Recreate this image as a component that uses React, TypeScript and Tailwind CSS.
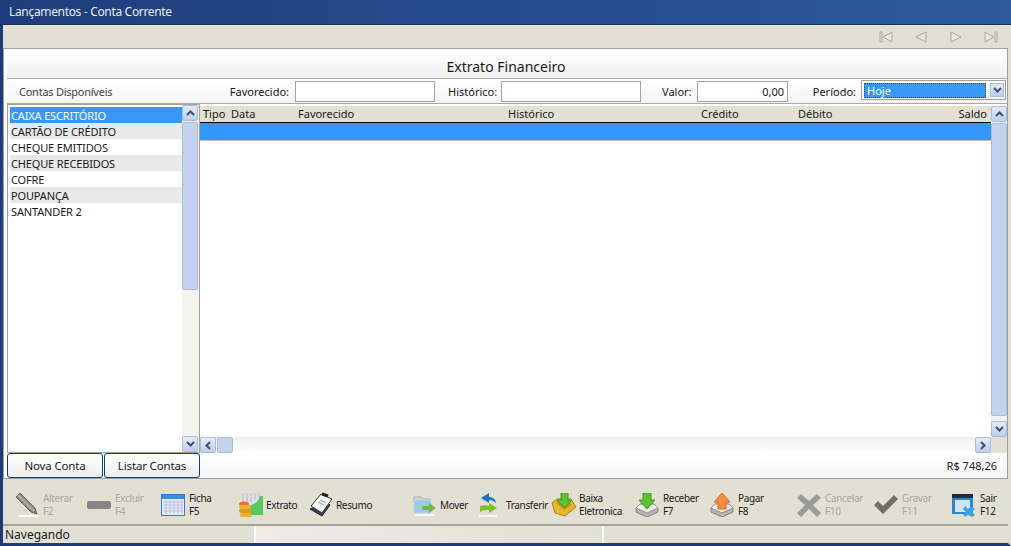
import type { ReactNode } from "react";

const Up = () => (
  <svg width="9" height="6" viewBox="0 0 9 6"><path d="M1 5 L4.5 1.5 L8 5" fill="none" stroke="#3f4f66" strokeWidth="2" /></svg>
);
const Down = () => (
  <svg width="9" height="6" viewBox="0 0 9 6"><path d="M1 1 L4.5 4.5 L8 1" fill="none" stroke="#3f4f66" strokeWidth="2" /></svg>
);
const Left = () => (
  <svg width="6" height="9" viewBox="0 0 6 9"><path d="M5 1 L1.5 4.5 L5 8" fill="none" stroke="#3f4f66" strokeWidth="2" /></svg>
);
const Right = () => (
  <svg width="6" height="9" viewBox="0 0 6 9"><path d="M1 1 L4.5 4.5 L1 8" fill="none" stroke="#3f4f66" strokeWidth="2" /></svg>
);

const ScrollBtn = ({ children }: { children: ReactNode }) => (
  <div className="w-[16px] h-[16px] shrink-0 flex items-center justify-center rounded-[2px] border border-[#a9bcdc] bg-gradient-to-b from-[#e4ebf7] to-[#bccfec]">
    {children}
  </div>
);

const Thumb = ({ className }: { className: string }) => (
  <div className={"rounded-[2px] border border-[#a9bcdc] bg-[#c3d3ed] " + className} />
);

const NavIcon = ({ d }: { d: string }) => (
  <svg width="14" height="12" viewBox="0 0 14 12">
    <path d={d} fill="#e9e7dd" stroke="#a8a89f" strokeWidth="1" />
  </svg>
);

const Pencil = () => (
  <svg width="24" height="26" viewBox="0 0 24 26">
    <path d="M1 5 L5 1 L20 16 L22 22 L16 20 Z" fill="#8c8c8c" stroke="#666" />
    <path d="M3 3 L19 19" stroke="#b5b5b5" strokeWidth="1.5" />
    <path d="M4 24 H23" stroke="#fff" strokeWidth="2" />
  </svg>
);
const Minus = () => (
  <svg width="24" height="10" viewBox="0 0 24 10"><rect x="0" y="1" width="24" height="8" rx="2" fill="#868686" /></svg>
);
const Calendar = () => (
  <svg width="24" height="22" viewBox="0 0 24 22">
    <rect x="0.5" y="0.5" width="23" height="21" fill="#e8ecf8" stroke="#2f7fd0" />
    <rect x="1" y="1" width="22" height="4" fill="#3a8de0" />
    <path d="M2 8H22M2 11H22M2 14H22M2 17H22M5 6V20M9 6V20M13 6V20M17 6V20M21 6V20" stroke="#b9bfe0" strokeWidth="1" />
  </svg>
);
const Coins = () => (
  <svg width="26" height="26" viewBox="0 0 26 26">
    <path d="M5 1 H24 V23 H12 V12 H5 Z" fill="#dfdfe4" />
    <path d="M5 1V10M9 1V10M13 1V10M17 1V8M21 1V5" stroke="#b8b8c4" />
    <path d="M8 14 L14 13 L19 10 L22 4 L25 4 V23 H10 Z" fill="#58c75f" />
    <ellipse cx="6" cy="12" rx="5" ry="2.5" fill="#f0683c" />
    <rect x="1" y="13" width="12" height="4" rx="2" fill="#e8b52a" />
    <rect x="1" y="17" width="13" height="4" rx="2" fill="#d99f1c" />
    <rect x="2" y="21" width="12" height="4" rx="2" fill="#e8b52a" />
  </svg>
);
const Notepad = () => (
  <svg width="26" height="26" viewBox="0 0 26 26">
    <path d="M2 17 L14 24 L22 13 L20 11 Z" fill="#33476b" stroke="#222" />
    <path d="M3 14 L14 21 L24 7 L13 2 Z" fill="#f7f7f7" stroke="#333" />
    <path d="M14 2 L20 4" stroke="#222" strokeWidth="3" />
    <path d="M10 10 L16 13 M12 8 L18 11" stroke="#9aa0a8" />
  </svg>
);
const Folder = () => (
  <svg width="24" height="22" viewBox="0 0 24 22">
    <path d="M1 3 H8 L10 5 H17 V8 H1 Z" fill="#d8d8d2" stroke="#aaa" />
    <rect x="1" y="6" width="17" height="13" rx="1" fill="#9cc8ee" stroke="#c8d8e4" />
    <path d="M9 12 H16 V9 L23 14 L16 19 V16 H9 Z" fill="#7cb342" />
    <path d="M2 21 H22" stroke="#fff" strokeWidth="1.5" />
  </svg>
);
const Swap = () => (
  <svg width="22" height="24" viewBox="0 0 22 24">
    <path d="M3 10 C3 6 7 4 10 4 V0 L18 5 L10 10 V7 C7 7 5 8 3 10 Z" transform="matrix(-1 0 0 1 21 0)" fill="#1e72c4" />
    <path d="M2 13 C5 12 8 12 11 13 V10 L19 15 L11 20 V17 C8 17 5 17 2 19 Z" fill="#83bb2e" />
    <path d="M1 23 H19" stroke="#fff" strokeWidth="1.5" />
  </svg>
);
const Tray = () => (
  <svg width="26" height="24" viewBox="0 0 26 24">
    <path d="M1 10 L6 6 H20 L25 14 L14 23 L4 20 Z" fill="#e8b92e" stroke="#a8801a" />
    <path d="M5 10 L13 17 L21 12 L18 8 H8 Z" fill="#c8931c" />
    <path d="M10 0 H17 V7 H21 L13.5 15 L6 7 H10 Z" fill="#5cc22e" stroke="#3f9a1c" />
  </svg>
);
const Inbox = ({ up }: { up?: boolean }) => (
  <svg width="24" height="24" viewBox="0 0 24 24">
    <path d="M1 15 L5 11 H19 L23 15 V19 L12 24 L1 19 Z" fill="#b5b5b5" stroke="#808080" />
    <path d="M1 15 L12 20 L23 15 L19 11 H5 Z" fill="#ececec" stroke="#909090" />
    {up ? (
      <path d="M12 0 L20 9 H16 V16 H8 V9 H4 Z" fill="#f58b3c" stroke="#d96a1c" />
    ) : (
      <path d="M8 0 H16 V7 H20 L12 16 L4 7 H8 Z" fill="#5cc22e" stroke="#3f9a1c" />
    )}
  </svg>
);
const Cross = () => (
  <svg width="24" height="24" viewBox="0 0 24 24">
    <path d="M4 1 L12 8 L20 1 L24 5 L16 12 L24 20 L20 24 L12 16 L4 24 L0 20 L8 12 L0 5 Z" fill="#9b9b9b" />
  </svg>
);
const Check = () => (
  <svg width="24" height="20" viewBox="0 0 24 20">
    <path d="M0 10 L4 6 L9 11 L20 0 L24 4 L9 19 Z" fill="#6f6f6f" />
  </svg>
);
const Exit = () => (
  <svg width="24" height="24" viewBox="0 0 24 24">
    <rect x="0" y="1" width="21" height="20" fill="#2a86d0" />
    <rect x="0" y="1" width="21" height="4" fill="#1c2c44" />
    <rect x="3" y="7" width="15" height="12" fill="#cfe3f5" />
    <path d="M13 13 L16 16 L19 13 L23 16 L20 19 L23 22 L20 24 L16 22 L13 24 L11 21 L14 19 L11 16 Z" fill="#3fa0e0" />
  </svg>
);

const tools = [
  { icon: <Pencil />, a: "Alterar", b: "F2", off: true },
  { icon: <Minus />, a: "Excluir", b: "F4", off: true },
  { icon: <Calendar />, a: "Ficha", b: "F5" },
  { icon: <Coins />, a: "Extrato" },
  { icon: <Notepad />, a: "Resumo" },
  { icon: <Folder />, a: "Mover", narrow: true },
  { icon: <Swap />, a: "Transferir" },
  { icon: <Tray />, a: "Baixa", b: "Eletronica" },
  { icon: <Inbox />, a: "Receber", b: "F7" },
  { icon: <Inbox up />, a: "Pagar", b: "F8" },
  { icon: <Cross />, a: "Cancelar", b: "F10", off: true },
  { icon: <Check />, a: "Gravar", b: "F11", off: true },
  { icon: <Exit />, a: "Sair", b: "F12" },
];

const contas = [
  "CAIXA ESCRITÓRIO",
  "CARTÃO DE CRÉDITO",
  "CHEQUE EMITIDOS",
  "CHEQUE RECEBIDOS",
  "COFRE",
  "POUPANÇA",
  "SANTANDER 2",
];

const inputBox = "h-[21px] shrink-0 bg-white border border-[#a5a29a]";

export default function App() {
  return (
    <div className="w-[1011px] h-[546px] overflow-hidden flex flex-col bg-[#e2dfd3] text-[11px] leading-none text-[#1a1a1a] font-['Noto_Sans','Open_Sans',sans-serif]">
      <div className="h-[25px] shrink-0 flex items-center pl-[9px] text-[12px] tracking-[-0.33px] text-[#e8edf5] bg-gradient-to-r from-[#1f3d7c] to-[#2c5a9c] border-b border-[#16305f]">
        Lançamentos - Conta Corrente
      </div>

      <div className="flex-1 min-h-0 flex flex-col border-x-[3px] border-b-[3px] border-[#1c3b78] border-r-[#e2dfd3]">
        <div className="h-[23px] shrink-0 flex items-center justify-end pr-[10px] gap-[21px]">
          <NavIcon d="M1 1 H3 V11 H1 Z M13 1 V11 L4 6 Z" />
          <NavIcon d="M12 1 V11 L2 6 Z" />
          <NavIcon d="M2 1 V11 L12 6 Z" />
          <NavIcon d="M11 1 H13 V11 H11 Z M1 1 V11 L10 6 Z" />
        </div>

        <div className="h-[431px] shrink-0 border border-[#9aa0a0] bg-white flex flex-col pl-[3px] pt-[3px]">
          <div className="h-[27px] shrink-0 flex items-center justify-center text-[14px] pt-[4px] pr-[2px] bg-gradient-to-b from-white to-[#f0f0f0] border-b border-[#aaa]">
            Extrato Financeiro
          </div>

          <div className="h-[25px] shrink-0 flex items-center bg-gradient-to-b from-white to-[#f3f3f3] border-b border-[#aaa]">
            <span className="w-[217px] shrink-0 pl-[12px] text-[#444] tracking-[-0.25px]">Contas Disponíveis</span>
            <span className="w-[65px] shrink-0 text-right">Favorecido:</span>
            <div className={inputBox + " w-[140px] ml-[6px]"} />
            <span className="w-[48px] shrink-0 ml-[13px] text-right">Histórico:</span>
            <div className={inputBox + " w-[140px] ml-[5px]"} />
            <span className="w-[29px] shrink-0 ml-[21px] text-right">Valor:</span>
            <div className={inputBox + " w-[91px] ml-[6px] flex items-center justify-end pr-[3px]"}>0,00</div>
            <span className="w-[44px] shrink-0 ml-[24px] text-right">Período:</span>
            <div className="w-[145px] h-[20px] shrink-0 ml-[5px] mb-[2px] border border-[#a5a29a] flex items-center pl-[2px] gap-[4px]">
              <div className="w-[122px] h-[15px] bg-[#3898f8] border border-dotted border-[#7a3d00] text-white pl-[2px] flex items-center">Hoje</div>
              <div className="w-[14px] h-[14px] flex items-center justify-center border border-[#a9bcdc] bg-gradient-to-b from-[#e4ebf7] to-[#bccfec]">
                <Down />
              </div>
            </div>
          </div>

          <div className="flex-1 min-h-0 flex">
            <div className="w-[193px] shrink-0 border border-[#a5a29a] flex">
              <div className="flex-1 pt-[2px] pl-[2px] tracking-[-0.15px]">
                {contas.map((c, i) => (
                  <div
                    key={c}
                    className={
                      "h-[16px] flex items-center pl-[1px] " +
                      (i === 0 ? "bg-[#3898f8] text-white" : i % 2 === 1 ? "bg-[#e9e9e9]" : "bg-white")
                    }
                  >
                    {c}
                  </div>
                ))}
              </div>
              <div className="w-[17px] shrink-0 flex flex-col bg-[#f3f3f0]">
                <ScrollBtn><Up /></ScrollBtn>
                <Thumb className="w-[16px] h-[168px] mt-[1px]" />
                <div className="flex-1" />
                <ScrollBtn><Down /></ScrollBtn>
              </div>
            </div>

            <div className="flex-1 min-w-0 flex">
              <div className="flex-1 min-w-0 flex flex-col">
                <div className="h-[17px] shrink-0 mt-[2px] pb-[2px] flex items-center bg-[#e2dfd3] border-b border-black">
                  <span className="w-[28px] pl-[3px]">Tipo</span>
                  <span className="w-[70px] pl-[3px]">Data</span>
                  <span className="w-[210px]">Favorecido</span>
                  <span className="w-[193px]">Histórico</span>
                  <span className="w-[97px]">Crédito</span>
                  <span className="w-[100px]">Débito</span>
                  <span className="flex-1 text-right pr-[4px]">Saldo</span>
                </div>
                <div className="h-[18px] shrink-0 bg-[#3398fb] border-b border-[#c6c6c6]" />
                <div className="flex-1" />
                <div className="h-[16px] shrink-0 flex items-center bg-gradient-to-b from-[#f0f0ee] to-white">
                  <ScrollBtn><Left /></ScrollBtn>
                  <Thumb className="w-[16px] h-[16px] ml-[1px]" />
                  <div className="flex-1" />
                  <ScrollBtn><Right /></ScrollBtn>
                </div>
              </div>
              <div className="w-[16px] shrink-0 flex flex-col bg-[#f3f3f0] mt-[2px]">
                <ScrollBtn><Up /></ScrollBtn>
                <Thumb className="w-[16px] h-[293px] mt-[1px]" />
                <div className="flex-1" />
                <ScrollBtn><Down /></ScrollBtn>
                <div className="h-[16px] bg-[#e2dfd3]" />
              </div>
            </div>
          </div>

          <div className="h-[25px] shrink-0 flex items-start bg-gradient-to-b from-white to-[#f5f5f5]">
            <div className="w-[96px] h-[25px] flex items-center justify-center text-[11.5px] tracking-[-0.15px] border border-[#12406e] rounded-[3px] bg-gradient-to-b from-white to-[#efefef]">Nova Conta</div>
            <div className="w-[96px] h-[25px] ml-[1px] flex items-center justify-center text-[11.5px] tracking-[-0.15px] border border-[#12406e] rounded-[3px] bg-gradient-to-b from-white to-[#efefef]">Listar Contas</div>
            <div className="flex-1 h-[25px] flex items-center justify-end pr-[10px] text-[#222]">R$ 748,26</div>
          </div>
        </div>

        <div className="h-[47px] shrink-0 pt-[7px] border-b-2 border-[#a5a29a] grid grid-cols-[72px_74px_77px_70px_105px_65px_73px_84px_75px_87px_77px_78px_56px] pl-[12px] items-center">
          {tools.map((t) => (
            <div key={t.a} className={"flex items-center " + (t.off ? "text-[#a8a8a0]" : "text-[#1a1a1a]")}>
              <div className={(t.narrow ? "w-[27px]" : "w-[28px]") + " shrink-0 flex items-center"}>{t.icon}</div>
              <div className="flex flex-col gap-[2px] text-[10px] tracking-[-0.35px] leading-[11px]">
                <span>{t.a}</span>
                {t.b && <span>{t.b}</span>}
              </div>
            </div>
          ))}
        </div>

        <div className="flex-1 flex items-center text-[12px] pl-[2px]">
          <span className="w-[251px] h-full flex items-center pt-[1px] border-r-2 border-white">Navegando</span>
          <div className="w-[348px] h-full border-r-2 border-white bg-gradient-to-r from-[#eeece4] to-[#e2dfd3]" />
        </div>
      </div>
    </div>
  );
}
